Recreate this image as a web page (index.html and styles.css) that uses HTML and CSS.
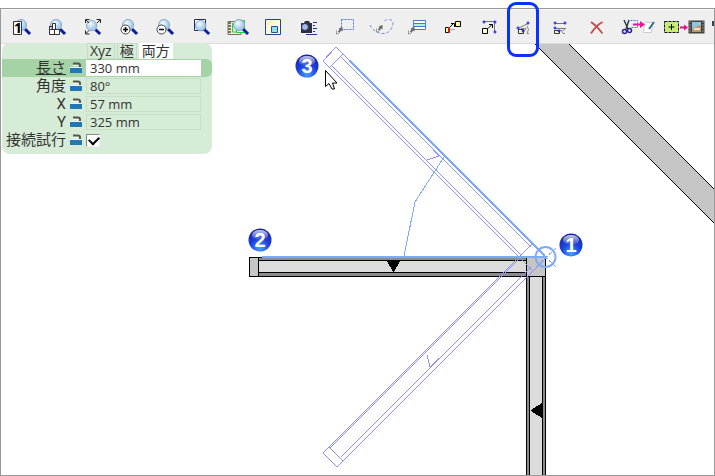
FILE: index.html
```
<!DOCTYPE html>
<html lang="ja">
<head>
    <meta charset="UTF-8">
    <meta name="viewport" content="width=device-width, initial-scale=1">
    <title>壁の編集</title>
    <link rel="stylesheet" href="styles.css">
</head>
<body>
    <!-- Shared icon parts -->
    <svg class="defs" aria-hidden="true">
        <defs>
            <radialGradient id="glass" cx="40%" cy="35%">
                <stop offset="0" stop-color="#f4fbff"/>
                <stop offset="1" stop-color="#a9cdec"/>
            </radialGradient>
            <radialGradient id="ball" cx="50%" cy="85%" r="85%">
                <stop offset="0" stop-color="#4aa0ff"/>
                <stop offset="0.5" stop-color="#1c3fe0"/>
                <stop offset="1" stop-color="#1a2496"/>
            </radialGradient>
            <linearGradient id="shine" x1="0" y1="0" x2="0" y2="1">
                <stop offset="0" stop-color="#fff" stop-opacity="0.75"/>
                <stop offset="1" stop-color="#fff" stop-opacity="0.05"/>
            </linearGradient>
            <linearGradient id="cream" x1="0" y1="0" x2="1" y2="1">
                <stop offset="0" stop-color="#fff3b8"/>
                <stop offset="1" stop-color="#fffef6"/>
            </linearGradient>
            <symbol id="lens" viewBox="0 0 18 18">
                <path d="M11 11l5 5" stroke="#0b1f9e" stroke-width="3"/>
                <circle cx="7" cy="7" r="5.5" fill="url(#glass)" stroke="#86a6c8"/>
            </symbol>
            <symbol id="pick" viewBox="0 0 7 8">
                <path d="M6.500 0v4.500L5 3.500L3.500 6L2 4.500L3.500 2.500L2.500 1.500z" fill="#666"/>
                <path d="M.5 3.500V7L3 6.500" fill="none" stroke="#999"/>
            </symbol>
            <symbol id="plus" viewBox="0 0 4 4">
                <path d="M2 .5v3M.5 2h3" stroke="#1a1ae6" stroke-width="1.200"/>
            </symbol>
            <symbol id="lock" viewBox="0 0 14 12">
                <path d="M4 1.500h5q2 0 2 2V5" fill="none" stroke="#555" stroke-width="2"/>
                <path d="M4 3.500h5" stroke="#fff"/>
                <path d="M1 6h12v5H1z" fill="#2278b5"/>
                <path d="M1 5.500h12" stroke="#e8f4ff"/>
            </symbol>
        </defs>
    </svg>

    <div class="window">
        <div class="toolbar">
            <button class="tool" aria-label="等倍表示">
                <svg class="icon" viewBox="0 0 36 34">
                    <use href="#lens" x="11" y="9" width="18" height="18"/>
                    <path d="M10.500 12.500h8v13h-8z" fill="#fff" stroke="#333"/>
                    <text class="icon-digit" x="11" y="24">1</text>
                </svg>
            </button>
            <button class="tool" aria-label="用紙全体">
                <svg class="icon" viewBox="0 0 36 34">
                    <use href="#lens" x="10" y="9" width="18" height="18"/>
                    <path d="M13.500 14.500h3v6h-3zM10.500 20.500h10v5h-10zM10.500 17.500h3M10.500 17v4M15.500 20v5" fill="#fff" stroke="#333"/>
                </svg>
            </button>
            <button class="tool" aria-label="全体表示">
                <svg class="icon" viewBox="0 0 36 34">
                    <use href="#lens" x="10" y="10" width="17" height="17"/>
                    <path d="M10.500 14v-3.500h4M21.500 10.500h4V14M10.500 21.500v3.500h4M11 11l3 3M25 11l-3 3M11 24.500l3-3" fill="none" stroke="#222"/>
                </svg>
            </button>
            <button class="tool" aria-label="拡大">
                <svg class="icon" viewBox="0 0 36 34">
                    <use href="#lens" x="10" y="9" width="18" height="18"/>
                    <circle cx="14.500" cy="20.500" r="4.500" fill="#fff" stroke="#444"/>
                    <path d="M12 20.500h5M14.500 18v5" stroke="#000" stroke-width="1.500"/>
                </svg>
            </button>
            <button class="tool" aria-label="縮小">
                <svg class="icon" viewBox="0 0 36 34">
                    <use href="#lens" x="10" y="9" width="18" height="18"/>
                    <circle cx="14.500" cy="20.500" r="4.500" fill="#fff" stroke="#444"/>
                    <path d="M12 20.500h5" stroke="#000" stroke-width="1.500"/>
                </svg>
            </button>
            <button class="tool" aria-label="範囲拡大">
                <svg class="icon" viewBox="0 0 36 34">
                    <path d="M11.500 10.500h11v11h-11z" fill="#fff" stroke="#1d2a66"/>
                    <use href="#lens" x="11" y="10" width="17" height="17"/>
                </svg>
            </button>
            <button class="tool" aria-label="表示切替">
                <svg class="icon" viewBox="0 0 36 34">
                    <path d="M9 12.500h13v13H9z" fill="#efecd8" stroke="#77725c"/>
                    <path d="M10.500 13v12" stroke="#77725c" stroke-width="3" stroke-dasharray="2 1"/>
                    <path d="M13.500 14v9h9" fill="none" stroke="#1fd62b"/>
                    <path d="M17.500 11.500h8v12h-8z" fill="#d8f5d4" stroke="#1fd62b"/>
                    <use href="#lens" x="13" y="9" width="18" height="18"/>
                </svg>
            </button>
            <button class="tool" aria-label="ビュー">
                <svg class="icon" viewBox="0 0 36 34">
                    <path d="M10.500 10.500h15v15h-15z" fill="url(#cream)" stroke="#24448f"/>
                    <path d="M16.500 17.500h6v6h-6z" fill="#93dcf8" stroke="#24509f"/>
                </svg>
            </button>
            <button class="tool" aria-label="スナップショット">
                <svg class="icon" viewBox="0 0 36 34">
                    <path d="M10 14h3l1-2h4l1 2h2v10H10z" fill="#30303c"/>
                    <circle cx="14" cy="18" r="3.500" fill="#a9b6e8" stroke="#222a60"/>
                    <path d="M22 13.500h4M22 16.500h2M22 19.500h4M22 22.500h2M15 25.500h11" stroke="#24348c"/>
                </svg>
            </button>
            <button class="tool" aria-label="矩形選択">
                <svg class="icon" viewBox="0 0 36 34">
                    <path d="M14.500 10.500h12v10h-12z" fill="none" stroke="#5478dc" stroke-dasharray="2 1"/>
                    <use href="#pick" x="9" y="18" width="7" height="8"/>
                </svg>
            </button>
            <button class="tool" aria-label="なげなわ選択">
                <svg class="icon" viewBox="0 0 36 34">
                    <path d="M7 16C9 21 15 25 21 24.500S30 18 30 14S24 9 20 13" fill="none" stroke="#6b92dc" stroke-dasharray="3 2"/>
                    <use href="#pick" x="13" y="16" width="7" height="8"/>
                </svg>
            </button>
            <button class="tool" aria-label="レイヤー選択">
                <svg class="icon" viewBox="0 0 36 34">
                    <path d="M14.500 11.500h12v9h-12z" fill="#fff" stroke="#4a76d8"/>
                    <path d="M14.500 14.500h12v3h-12z" fill="#b4f2c8" stroke="#4a76d8"/>
                    <use href="#pick" x="9" y="18" width="7" height="8"/>
                </svg>
            </button>
            <button class="tool" aria-label="移動">
                <svg class="icon" viewBox="0 0 36 34">
                    <path d="M20.500 12.500h5v5h-5zM10.500 18.500h4v5h-4z" fill="#ffff98" stroke="#000"/>
                    <path d="M14 18v6" stroke="#d01818" stroke-width="2"/>
                    <path d="M15 20.500h5" stroke="#aaa"/>
                    <path d="M15 18l4-4M16 14.500h3.500V18" fill="none" stroke="#000"/>
                </svg>
            </button>
            <button class="tool" aria-label="二方向移動">
                <svg class="icon" viewBox="0 0 36 34">
                    <path d="M12.500 12.500h11v10" fill="none" stroke="#777"/>
                    <path d="M11.500 19.500h5v5h-5z" fill="#ffffd8" stroke="#000"/>
                    <path d="M17 19.500l4-4M18 15.500h3.500V19" fill="none" stroke="#000"/>
                    <use href="#plus" x="11" y="11" width="4" height="4"/>
                    <use href="#plus" x="22" y="11" width="4" height="4"/>
                    <use href="#plus" x="22" y="21" width="4" height="4"/>
                </svg>
            </button>
            <button class="tool tool-current" aria-label="回転" aria-pressed="true">
                <svg class="icon" viewBox="0 0 36 34">
                    <path d="M12 19l9-4.500" stroke="#777"/>
                    <path d="M11.500 20.500h5v4h-5z" fill="#ffffb8" stroke="#333"/>
                    <path d="M14 19.500h5l-2 3M20 17q3 3 0 7.500h2" fill="none" stroke="#888"/>
                    <use href="#plus" x="9" y="17" width="4" height="4"/>
                    <use href="#plus" x="19" y="12" width="4" height="4"/>
                    <use href="#plus" x="14" y="20" width="4" height="4"/>
                </svg>
            </button>
            <button class="tool" aria-label="伸縮">
                <svg class="icon" viewBox="0 0 36 34">
                    <path d="M13 14.500h8M13 19.500h10" stroke="#777"/>
                    <path d="M11.500 21.500h5v3h-5z" fill="#ffffb8" stroke="#333"/>
                    <path d="M22 20l-3 2.500 1 2h2M16 21.500h3" fill="none" stroke="#888"/>
                    <use href="#plus" x="10" y="12" width="4" height="4"/>
                    <use href="#plus" x="20" y="12" width="4" height="4"/>
                    <use href="#plus" x="10" y="17" width="4" height="4"/>
                    <use href="#plus" x="14" y="20" width="4" height="4"/>
                </svg>
            </button>
            <button class="tool" aria-label="削除">
                <svg class="icon" viewBox="0 0 36 34">
                    <path d="M12 13q6 4 11.500 11.500M23.500 13q-7 4-11.500 11.500" fill="none" stroke="#c44c4c" stroke-width="1.800"/>
                </svg>
            </button>
            <button class="tool tool-wide" aria-label="切り取って貼り付け">
                <svg class="icon" viewBox="0 0 46 34">
                    <path d="M15.500 11.500h7v7h-7" fill="none" stroke="#5478dc" stroke-dasharray="2 1"/>
                    <path d="M9 11l4 9M14 11l-3 9" stroke="#333b60" stroke-width="1.500"/>
                    <circle cx="9.500" cy="22.500" r="2" fill="none" stroke="#24249a" stroke-width="1.500"/>
                    <circle cx="14.500" cy="21.500" r="2" fill="none" stroke="#24249a" stroke-width="1.500"/>
                    <path d="M29.500 13.500h8l-1 10h-8z" fill="#fff" stroke="#ccc"/>
                    <path d="M39 13l-5 7" stroke="#2a6f9c" stroke-width="2"/>
                    <path d="M18 14.500h7v-2.500l5 3.500-5 3.500v-2.500h-7z" fill="#f0109c"/>
                </svg>
            </button>
            <button class="tool tool-wide" aria-label="アニメーションに追加">
                <svg class="icon" viewBox="0 0 46 34">
                    <path d="M3.500 12.500h14v11h-14z" fill="#c6ee72" stroke="#111" stroke-dasharray="3 1"/>
                    <path d="M10.500 15v6M7.500 18h6" stroke="#000"/>
                    <path d="M19 17.500h4v-2l4 3-4 3v-2h-4z" fill="#e0108c"/>
                    <path d="M27.500 11.500h16v13h-16z" fill="#45413c"/>
                    <path d="M29 12.500v12M42 12.500v12" stroke="#ddd" stroke-dasharray="1 2"/>
                    <path d="M31 13h9v10h-9z" fill="#b89a72"/>
                    <path d="M31 13h9v3l-4 1-5 3z" fill="#8fc4e4"/>
                    <path d="M33 19h6v2h-6z" fill="#f0e0c0"/>
                </svg>
            </button>
            <button class="tool" aria-label="その他">
                <svg class="icon" viewBox="0 0 36 34">
                    <path d="M5 12h4v5H5z" fill="#33415c"/>
                </svg>
            </button>
        </div>

        <div class="canvas">
            <svg class="drawing" viewBox="1 44 713 431" preserveAspectRatio="xMinYMin slice">
                <!-- Diagonal wall, upper right -->
                <path class="wall-solid" d="M535 44L715 224V190L569 44z"/>
                <path class="edge" d="M535 44l180 180M569 44l146 146"/>

                <!-- Horizontal wall -->
                <path class="wall-skin" d="M259 257h268v20H259z"/>
                <path class="wall-core" d="M259 261h268v11H259z"/>
                <path class="edge" d="M249.500 257.500h277M249.500 276.500h277M259 260.500h267M259 272.500h267"/>
                <path class="wall-solid edge" d="M249.500 257.500h9v19h-9z"/>
                <path d="M387 261h13l-6 11h-1z"/>

                <!-- Vertical wall -->
                <path class="wall-skin" d="M526 276h20v200h-20z"/>
                <path class="wall-core" d="M530 276h12v200h-12z"/>
                <path class="edge" d="M526.500 276v200M529.500 276v200M542.500 276v200M545.500 276v200"/>
                <path class="wall-solid edge" d="M526.500 257.500h19v19h-19z"/>
                <path d="M542 403v15l-11-7v-1z"/>

                <!-- Mirrored and rotated ghosts -->
                <path class="ghost" d="M519 257L323 453L337 467L545 259M522 256L330 448M531 267L341 457M329 447L343 461M519 257L532 270M427 355L430 367L439 358"/>
                <path class="ghost" d="M545 256L336 47L323 61L530 268M531 247L341 57M521 255L331 65M343 54L330 67M532 244L519 257M427 160L439 156L431 147"/>
                <path class="guide" d="M444 157L415 202L404 256"/>
                <path class="axis" d="M262 257H545M350 61L545 256"/>
                <circle class="axis pivot" cx="545.500" cy="257" r="10"/>
                <path class="guide" d="M536 248l20 19M536 267l20-19" stroke-dasharray="4 2"/>

                <!-- Step numbers -->
                <g class="step">
                    <circle cx="571" cy="245" r="11.500"/>
                    <ellipse cx="571" cy="240" rx="8" ry="5"/>
                    <text x="571" y="252">1</text>
                    <circle cx="260" cy="240" r="11.500"/>
                    <ellipse cx="260" cy="235" rx="8" ry="5"/>
                    <text x="260" y="247">2</text>
                    <circle cx="307" cy="66" r="11.500"/>
                    <ellipse cx="307" cy="61" rx="8" ry="5"/>
                    <text x="307" y="73">3</text>
                </g>

                <path class="pointer" d="M325.500 70.500v16l3.500-3 3 5.500h2.500l-2-6h4.500z"/>
            </svg>

            <form class="panel">
                <div class="tabs">
                    <button type="button" class="tab">Xyz</button>
                    <button type="button" class="tab">極</button>
                    <button type="button" class="tab tab-on">両方</button>
                </div>
                <div class="row row-on">
                    <label for="length">長さ</label>
                    <svg class="lock"><use href="#lock"/></svg>
                    <input class="field" id="length" type="text" value="330 mm">
                </div>
                <div class="row">
                    <label for="angle">角度</label>
                    <svg class="lock"><use href="#lock"/></svg>
                    <input class="field" id="angle" type="text" value="80°">
                </div>
                <div class="row">
                    <label for="x">X</label>
                    <svg class="lock"><use href="#lock"/></svg>
                    <input class="field" id="x" type="text" value="57 mm">
                </div>
                <div class="row">
                    <label for="y">Y</label>
                    <svg class="lock"><use href="#lock"/></svg>
                    <input class="field" id="y" type="text" value="325 mm">
                </div>
                <div class="row">
                    <label for="join">接続試行</label>
                    <svg class="lock"><use href="#lock"/></svg>
                    <input class="check" id="join" type="checkbox" checked>
                </div>
            </form>
        </div>
    </div>
</body>
</html>
```

FILE: styles.css
```
* {
    box-sizing: border-box;
}

body {
    margin: 0;
    padding-top: 8px;
    min-height: 100vh;
    display: flex;
    background: #fff;
    font-family: "Open Sans", "Noto Sans CJK JP", sans-serif;
    font-size: 13px;
    color: #333;
}

.defs {
    position: absolute;
    width: 0;
    height: 0;
}

.window {
    flex: 1;
    min-width: 0;
    display: flex;
    flex-direction: column;
    border: 1px solid #999;
}

/* Toolbar */
.toolbar {
    display: flex;
    height: 35px;
    padding-left: 2px;
    background: #efefef;
    border-top: 1px solid #f8f8f8;
    border-bottom: 1px solid #dcdcdc;
    clip-path: inset(-8px 0 -20px 0);
    position: relative;
    z-index: 1;
}

.tool {
    flex: 0 0 36px;
    height: 34px;
    margin-top: -1px;
    padding: 0;
    border: 0;
    background: none;
    position: relative;
}

.tool-wide {
    flex-basis: 46px;
}

.icon {
    display: block;
    width: 100%;
    height: 34px;
}

.icon-digit {
    font: bold 14px "Open Sans", sans-serif;
    fill: #000;
}

/* Ring round the tool in use */
.tool-current::after {
    content: "";
    box-sizing: border-box;
    position: absolute;
    left: 0;
    top: -7px;
    width: 32px;
    height: 55px;
    border: 3px solid #0a32ff;
    border-radius: 9px;
}

/* Drawing */
.canvas {
    flex: 1;
    position: relative;
}

.drawing {
    position: absolute;
    width: 100%;
    height: 100%;
    shape-rendering: crispEdges;
}

.wall-solid {
    fill: #c6c6c6;
}

.wall-skin {
    fill: #8c8c8c;
}

.wall-core {
    fill: #dcdcdc;
}

.edge {
    stroke: #000;
}

.ghost {
    fill: none;
    stroke: #9090fa;
}

.guide {
    fill: none;
    stroke: #7faaf5;
}

.axis {
    fill: none;
    stroke: #7faaf5;
    stroke-width: 2;
}

.pivot,
.pointer,
.step {
    shape-rendering: auto;
}

.pointer {
    fill: #fff;
    stroke: #000;
}

.step circle {
    fill: url(#ball);
}

.step ellipse {
    fill: url(#shine);
}

.step text {
    font: bold 20px "Liberation Sans", sans-serif;
    text-anchor: middle;
    fill: #fff;
}

/* Coordinate panel */
.panel {
    position: absolute;
    z-index: 2;
    left: 1px;
    top: -1px;
    width: 210px;
    padding-bottom: 5px;
    background: #d7ecd7;
    border-radius: 8px;
}

.tabs {
    display: flex;
    gap: 2px;
    height: 16px;
    padding-left: 85px;
}

.tab {
    height: 16px;
    padding: 0 2px;
    border: 1px solid #c6dcc6;
    background: none;
    font: 14px/14px "Open Sans", "Noto Sans CJK JP", sans-serif;
    color: #333;
}

.tab-on {
    background: #fff;
    border-color: #fff;
}

.row {
    display: grid;
    grid-template-columns: 64px 14px 115px;
    column-gap: 3px;
    align-items: center;
    height: 18px;
}

.row label {
    text-align: right;
    font: 15px/18px Roboto, "Noto Sans CJK JP", sans-serif;
    white-space: nowrap;
}

.row-on {
    background: #a5d3a5;
    border-radius: 0 6px 6px 0;
}

.row-on label {
    text-decoration: underline;
}

.lock {
    width: 14px;
    height: 12px;
}

.field {
    width: 115px;
    height: 16px;
    padding: 0 3px;
    border: 1px solid #c8dec8;
    background: none;
    font: 13px/14px "Open Sans", sans-serif;
    color: #333;
}

.row-on .field {
    background: #fff;
    border-color: #fff;
}

.check {
    appearance: none;
    width: 14px;
    height: 13px;
    margin: 0;
    border: 1px solid #888;
    border-right-color: #eee;
    border-bottom-color: #eee;
    background: #fff;
}

.check:checked::before {
    content: "";
    display: block;
    width: 8px;
    height: 5px;
    margin: 1px 2px;
    border: solid #000;
    border-width: 0 0 2px 2px;
    transform: rotate(-45deg);
}
```
